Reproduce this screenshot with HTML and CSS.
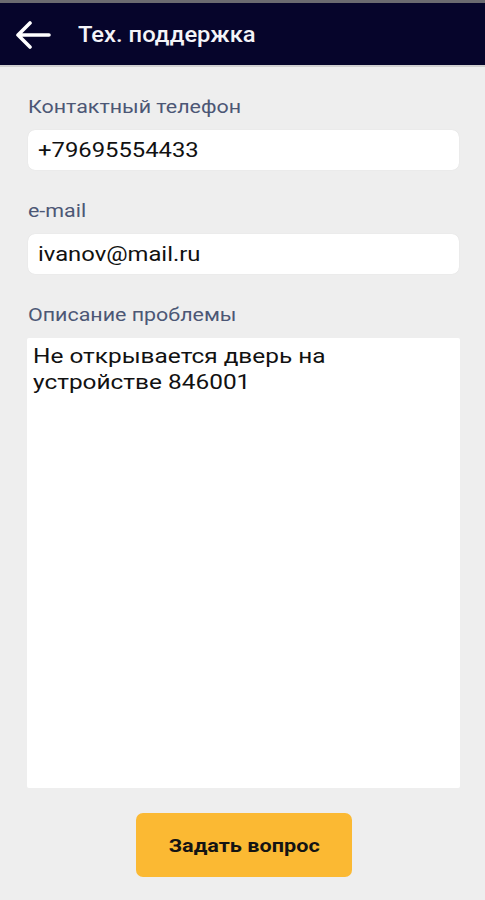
FILE: index.html
```html
<!DOCTYPE html>
<html lang="ru">
<head>
<meta charset="utf-8">
<title>Тех. поддержка</title>
<link rel="stylesheet" href="styles.css">
</head>
<body>
<header class="appbar">
  <svg class="back" width="36" height="28" viewBox="0 0 36 28" aria-hidden="true">
    <path d="M3 14 H34 M15 2 L3 14 L15 26" fill="none" stroke="#fff" stroke-width="3.6" stroke-linecap="round" stroke-linejoin="round"/>
  </svg>
  <h1 class="title"><span class="wide">Тех. поддержка</span></h1>
</header>
<main class="form">
  <label class="label"><span class="wide">Контактный телефон</span></label>
  <div class="field"><span class="wide">+79695554433</span></div>
  <label class="label label-gap"><span class="wide">e-mail</span></label>
  <div class="field"><span class="wide">ivanov@mail.ru</span></div>
  <label class="label label-gap"><span class="wide">Описание проблемы</span></label>
  <div class="area"><span class="wide">Не открывается дверь на<br>устройстве 846001</span></div>
  <div class="actions">
    <button class="btn"><span class="wide">Задать вопрос</span></button>
  </div>
</main>
</body>
</html>
```
FILE: styles.css
```css
* { box-sizing: border-box; }
html, body { margin: 0; padding: 0; }
body {
  background: #eeeeee;
  font-family: Roboto, "Noto Sans", "Liberation Sans", sans-serif;
  width: 485px;
  height: 900px;
  overflow: hidden;
}
.wide {
  display: inline-block;
  white-space: nowrap;
  transform-origin: left center;
}
.appbar {
  height: 67px;
  background: #06052b;
  border-top: 3px solid #6b6b70;
  border-bottom: 2px solid #d0d0d0;
  display: flex;
  align-items: center;
  padding-left: 15px;
}
.back { display: block; margin-top: 2px; }
.title {
  margin: 0 0 0 27px;
  color: #f4f4f8;
  font-size: 22px;
  font-weight: 500;
}
.title .wide { transform: scaleX(1.08); }
.form {
  display: flex;
  flex-direction: column;
  padding: 29px 26px 0 28px;
}
.label {
  color: #4c5775;
  font-size: 18px;
  line-height: 22px;
  margin-bottom: 12px;
}
.label .wide { transform: scaleX(1.19); }
.label-gap { margin-top: 30px; }
.field {
  height: 40px;
  background: #ffffff;
  border-radius: 7px;
  box-shadow: 0 0 1px rgba(0,0,0,0.12);
  padding-left: 10px;
  display: flex;
  align-items: center;
  font-size: 20px;
  color: #111111;
}
.field .wide { transform: scaleX(1.19); }
.area {
  height: 450px;
  margin-left: -1px;
  margin-right: -1px;
  background: #ffffff;
  border-radius: 2px;
  padding: 5px 6px;
  font-size: 20px;
  line-height: 26px;
  color: #111111;
}
.area .wide { transform: scaleX(1.22); transform-origin: left top; }
.actions {
  display: flex;
  justify-content: center;
  padding-top: 25px;
  padding-left: 1px;
}
.btn {
  width: 216px;
  height: 64px;
  border: none;
  border-radius: 7px;
  background: #fbb933;
  color: #141414;
  font-family: Roboto, "Noto Sans", sans-serif;
  font-size: 19px;
  font-weight: 700;
}
.btn .wide { transform: scaleX(1.14); transform-origin: center; }
```
